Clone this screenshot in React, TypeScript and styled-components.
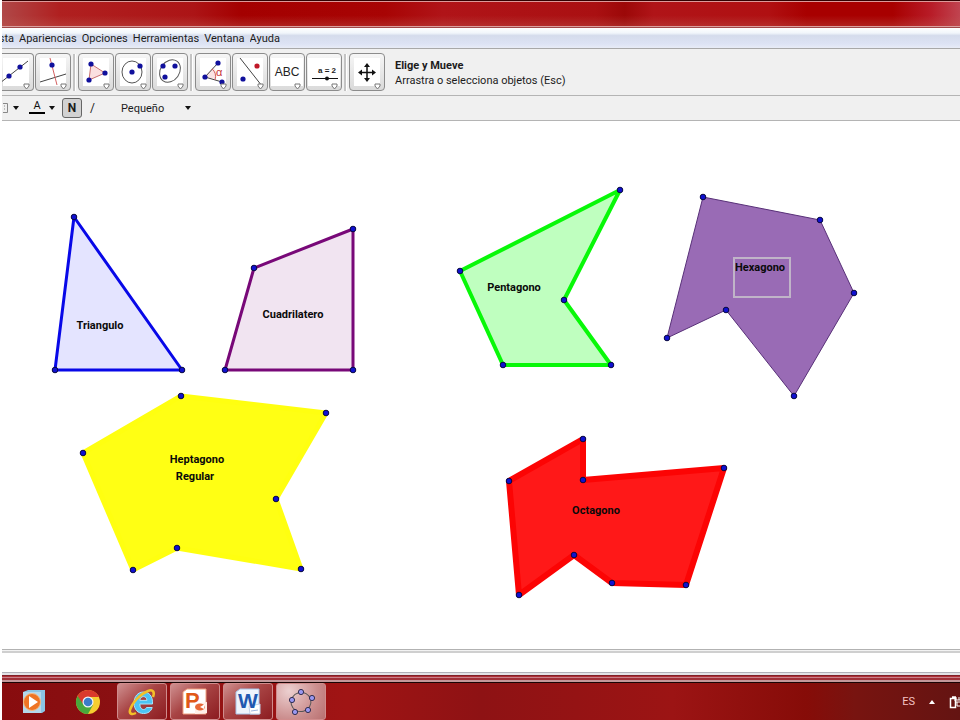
import React from "react";
import styled, { createGlobalStyle } from "styled-components";

const GlobalStyle = createGlobalStyle`
  * { box-sizing: border-box; }
  body { margin: 0; background: #fff; font-family: Roboto, "Liberation Sans", sans-serif; font-size: 11px; color: #1c1c1c; }
  button, select { font: inherit; color: inherit; padding: 0; margin: 0; }
`;

const Screen = styled.div`
  display: flex;
  flex-direction: column;
  min-height: 100vh;
  padding-left: 2px;
  overflow: hidden;
`;

const TitleBar = styled.header`
  height: 28px;
  border-top: 1px solid #300;
  border-bottom: 1px solid #a04848;
  box-shadow: inset 0 1px #d99, inset 0 -1px #dba0a0;
  background:
    linear-gradient(180deg, transparent 55%, rgba(190, 90, 80, 0.4)),
    linear-gradient(90deg, #b04848 0, #b02020 6%, #ac1416 20%, #a40000 25%, #a80404 40%, #b01418 46%, #aa1012 62%, #9c0808 65%, #b01418 68%, #b01012 80%, #a80000 84%, #a80000 93%, #b81c28 97%, #c04450 100%);
`;

const MenuBar = styled.nav`
  display: flex;
  align-items: center;
  gap: 5px;
  height: 21px;
  border-bottom: 1px solid #a8a8a8;
  background: linear-gradient(180deg, #fff 0, #f1f6fb 25%, #d5dcec 38%, #dde3f4 80%, #e8ecf6 100%);
`;

const MenuItem = styled.button<{ $cut?: boolean }>`
  display: flex;
  justify-content: flex-end;
  width: ${(p) => (p.$cut ? "12px" : "auto")};
  overflow: hidden;
  border: 0;
  background: none;
  white-space: nowrap;
`;

const ToolBar = styled.div`
  display: flex;
  align-items: center;
  height: 47px;
  background: #f0f0f0;
  border-bottom: 1px solid #b4b4b4;
`;

const ToolGroup = styled.div`
  display: flex;
  gap: 1px;
`;

const Divider = styled.span`
  width: 7px;
  height: 37px;
  display: flex;
  justify-content: center;
  &::before { content: ""; width: 2px; background: #c4c4c4; border-right: 1px solid #fff; }
`;

const ToolButton = styled.button<{ $cut?: boolean }>`
  display: flex;
  justify-content: ${(p) => (p.$cut ? "flex-end" : "center")};
  align-items: center;
  width: ${(p) => (p.$cut ? 32 : 36)}px;
  height: 38px;
  border: 1px solid #8c8c8c;
  border-left-width: ${(p) => (p.$cut ? 0 : 1)}px;
  border-radius: ${(p) => (p.$cut ? "0 4px 4px 0" : "4px")};
  background: linear-gradient(#f6f6f6, #dadada);
  overflow: hidden;
  svg { flex: none; display: block; }
`;

const Help = styled.div`
  margin-left: 10px;
  padding-top: 2px;
  font-size: 11px;
  line-height: 15px;
  white-space: nowrap;
`;

const HelpTitle = styled.div`
  font-weight: bold;
`;

const StyleBar = styled.div`
  display: flex;
  align-items: center;
  gap: 1px;
  height: 25px;
  background: #f0f0f0;
  border-bottom: 1px solid #b4b4b4;
`;

const StyleButton = styled.button<{ $width: number; $on?: boolean }>`
  display: flex;
  align-items: center;
  justify-content: center;
  width: ${(p) => p.$width}px;
  height: 20px;
  border: 1px solid ${(p) => (p.$on ? "#666" : "transparent")};
  border-radius: 3px;
  background: ${(p) => (p.$on ? "#d2d2d2" : "none")};
  font-weight: ${(p) => (p.$on ? "bold" : "normal")};
  font-size: 12px;
  svg { flex: none; display: block; }
`;

const SizeField = styled.label`
  display: flex;
  align-items: center;
  margin-left: 18px;
`;

const SizeSelect = styled.select`
  appearance: none;
  width: 64px;
  border: 0;
  background: none;
`;

const Canvas = styled.main`
  flex: 1;
  display: flex;
  min-height: 528px;
  svg { display: block; flex: 1; min-width: 0; }
  text { font: bold 11px Roboto, "Liberation Sans", sans-serif; fill: #0a0a0a; text-anchor: middle; }
`;

const InputStrip = styled.div`
  height: 24px;
  border-top: 1px solid #b2b2b2;
  border-bottom: 1px solid #b0b0b8;
  box-shadow: inset 0 1px #f2f2f2, inset 0 3px #cfcfcf;
`;

const WindowEdge = styled.div`
  height: 10px;
  background: linear-gradient(180deg, #e2e2e6 0 2px, #802028 2px 3px, #b03038 3px 4px, #c8808a 4px 5px, #a03038 5px 7px, #c4989a 7px 9px, #180404 9px);
`;

const TaskBar = styled.footer`
  display: flex;
  align-items: center;
  height: 37px;
  padding-left: 7px;
  background: linear-gradient(90deg, #880c0e 0, #8a1012 12%, #a01414 36%, #8e1214 50%, #9c1414 70%, #860c08 84%, #781410 89%, #641412 100%);
`;

const TaskButton = styled.button<{ $state?: "open" | "active" }>`
  display: flex;
  align-items: center;
  justify-content: center;
  width: 50px;
  height: 37px;
  margin-right: ${(p) => (p.$state ? 3 : 4)}px;
  border: 1px solid ${(p) => (p.$state ? "#d08c8c" : "transparent")};
  border-radius: 3px;
  background: ${(p) =>
    p.$state === "active"
      ? "radial-gradient(circle at 25% 20%, #ecd0d0, #cc8f8f 60%, #b87070)"
      : p.$state === "open"
      ? "linear-gradient(140deg, #cf9090, #a84444 45%, #8c1c20)"
      : "none"};
  svg { flex: none; display: block; }
`;

const Tray = styled.div`
  display: flex;
  align-items: center;
  gap: 14px;
  margin-left: auto;
  color: #f4c4c4;
  svg { display: block; }
`;

const TrayButton = styled.button`
  border: 0;
  background: none;
`;

const Dot = ({ x, y, c = "#10109c" }: { x: number; y: number; c?: string }) => (
  <circle cx={x} cy={y} r="2.600" fill={c} />
);

const ToolIcon = ({ children, wide }: { children: React.ReactNode; wide?: boolean }) => (
  <svg width="34" height="36" viewBox="0 0 34 36" fill="none" stroke="none" fontFamily="Liberation Sans, sans-serif">
    <rect x={wide ? 1 : 4} y="4" width={wide ? 32 : 26} height="28" fill="#fff" />
    {children}
    <path d="M25 30h5v2l-2.500 3-2.500-3z" fill="#fff" stroke="#777" />
  </svg>
);

const Arrow = () => (
  <svg width="6" height="4" viewBox="0 0 6 4"><path d="M0 0h6L3 4z" fill="#111" /></svg>
);

type Shape = { name: string; points: number[][]; fill: string; stroke: string; width: number };

const shapes: Shape[] = [
  { name: "Triangulo", points: [[72, 96], [53, 249], [180, 249]], fill: "#e4e4ff", stroke: "#0808e8", width: 3 },
  { name: "Cuadrilatero", points: [[252, 147], [351, 108], [351, 249], [223, 249]], fill: "#f1e4f1", stroke: "#780878", width: 3 },
  { name: "Pentagono", points: [[458, 150], [618, 69], [562, 179], [609, 244], [501, 244]], fill: "#bfffbf", stroke: "#08f808", width: 4 },
  { name: "Hexagono", points: [[701, 76], [818, 99], [852, 172], [792, 275], [724, 189], [665, 217]], fill: "#996bb5", stroke: "#583078", width: 1 },
  { name: "Heptagono", points: [[179, 275], [324, 292], [274, 378], [299, 448], [175, 427], [131, 449], [81, 332]], fill: "#ffff14", stroke: "#ffff10", width: 5 },
  { name: "Octagono", points: [[581, 318], [581, 359], [722, 347], [684, 464], [610, 462], [572, 434], [517, 474], [507, 360]], fill: "#ff1818", stroke: "#fc0404", width: 6 },
];

const labels: [string, number, number][] = [
  ["Triangulo", 98, 208],
  ["Cuadrilatero", 291, 197],
  ["Pentagono", 512, 170],
  ["Hexagono", 758, 150],
  ["Heptagono", 195, 342],
  ["Regular", 193, 359],
  ["Octagono", 594, 393],
];

const menus = ["Apariencias", "Opciones", "Herramientas", "Ventana", "Ayuda"];

export default function App() {
  return (
    <>
      <GlobalStyle />
      <Screen>
        <TitleBar />
        <MenuBar>
          <MenuItem $cut>sta</MenuItem>
          {menus.map((m) => <MenuItem key={m}>{m}</MenuItem>)}
        </MenuBar>
        <ToolBar>
          <ToolGroup>
            <ToolButton $cut aria-label="Recta">
              <ToolIcon><path d="M1 29L29 7" stroke="#444" /><Dot x={10} y={22} /><Dot x={21} y={13} /></ToolIcon>
            </ToolButton>
            <ToolButton aria-label="Perpendicular">
              <ToolIcon><path d="M4 28L30 20" stroke="#444" /><path d="M14 4L21 31" stroke="#d46060" /><Dot x={16} y={11} /></ToolIcon>
            </ToolButton>
          </ToolGroup>
          <Divider />
          <ToolGroup>
            <ToolButton aria-label="Polígono">
              <ToolIcon><path d="M12 10L26 19L10 26z" fill="#fbe0e0" stroke="#c87070" /><Dot x={12} y={10} /><Dot x={26} y={19} /><Dot x={10} y={26} /></ToolIcon>
            </ToolButton>
            <ToolButton aria-label="Circunferencia">
              <ToolIcon><ellipse cx="16" cy="18" rx="10" ry="11" stroke="#555" /><Dot x={16} y={18} /><Dot x={24} y={12} /></ToolIcon>
            </ToolButton>
            <ToolButton aria-label="Elipse">
              <ToolIcon><ellipse cx="17" cy="17" rx="9.500" ry="12" transform="rotate(35 17 17)" stroke="#555" /><Dot x={10} y={12} /><Dot x={22} y={12} /><Dot x={12} y={23} /></ToolIcon>
            </ToolButton>
          </ToolGroup>
          <Divider />
          <ToolGroup>
            <ToolButton aria-label="Ángulo">
              <ToolIcon>
                <path d="M9 23L17 13Q22 18 20 25z" fill="#fbe4e4" />
                <path d="M22 9L9 23L26 28" stroke="#444" /><path d="M16 15Q21 19 19 26" stroke="#d06060" />
                <text x="20" y="22" fontSize="11" fill="#c83838">α</text>
                <Dot x={22} y={9} /><Dot x={9} y={23} /><Dot x={26} y={28} />
              </ToolIcon>
            </ToolButton>
            <ToolButton aria-label="Simetría">
              <ToolIcon><path d="M7 4L29 32" stroke="#444" /><Dot x={24} y={12} c="#c01828" /><Dot x={10} y={25} /></ToolIcon>
            </ToolButton>
            <ToolButton aria-label="Texto">
              <ToolIcon wide><text x="17" y="22" fontSize="12" textAnchor="middle" fill="#222">ABC</text></ToolIcon>
            </ToolButton>
            <ToolButton aria-label="Deslizador">
              <ToolIcon wide><text x="20" y="19" fontSize="8" fontWeight="bold" textAnchor="middle" fill="#222">a = 2</text><path d="M5 24.500h26" stroke="#111" /><circle cx="20" cy="24.500" r="2" fill="#111" /></ToolIcon>
            </ToolButton>
          </ToolGroup>
          <Divider />
          <ToolButton aria-label="Elige y Mueve">
            <ToolIcon>
              <path d="M17 11v15M10 18.500h14" stroke="#111" strokeWidth="1.500" />
              <path d="M17 9l3 4h-6zM17 28l3-4h-6zM8 18.500l4-3v6zM26 18.500l-4-3v6z" fill="#111" />
            </ToolIcon>
          </ToolButton>
          <Help>
            <HelpTitle>Elige y Mueve</HelpTitle>
            <div>Arrastra o selecciona objetos (Esc)</div>
          </Help>
        </ToolBar>
        <StyleBar>
          <StyleButton $width={20} aria-label="Cuadrícula">
            <svg width="18" height="12" viewBox="0 0 18 12"><path d="M0 1.500h4.500v9H0M1 4h1M1 7h1" fill="none" stroke="#888" /><path d="M10 4h6l-3 4z" fill="#111" /></svg>
          </StyleButton>
          <StyleButton $width={38} aria-label="Color de texto">
            <svg width="28" height="16" viewBox="0 0 28 16"><text x="9" y="9" fontSize="11" textAnchor="middle" fill="#111">A</text><path d="M1 13h16" stroke="#000" strokeWidth="2" /><path d="M21 6h6l-3 4z" fill="#111" /></svg>
          </StyleButton>
          <StyleButton $width={20} $on>N</StyleButton>
          <StyleButton $width={19}>/</StyleButton>
          <SizeField>
            <SizeSelect aria-label="Tamaño de texto" defaultValue="Pequeño">
              <option>Pequeño</option>
            </SizeSelect>
            <Arrow />
          </SizeField>
        </StyleBar>
        <Canvas>
          <svg height="528" role="img" aria-label="Polígonos">
            {shapes.map((s) => (
              <g key={s.name}>
                <polygon points={s.points.map((p) => p.join(",")).join(" ")} fill={s.fill} stroke={s.stroke} strokeWidth={s.width} strokeLinejoin="bevel" />
                {s.points.map(([x, y]) => <circle key={`${x}-${y}`} cx={x} cy={y} r="2.800" fill="#1010d0" stroke="#080840" />)}
              </g>
            ))}
            <rect x="732" y="137" width="56" height="39" fill="none" stroke="#c0b4c8" strokeWidth="2" />
            {labels.map(([t, x, y]) => <text key={t} x={x} y={y}>{t}</text>)}
          </svg>
        </Canvas>
        <InputStrip />
        <WindowEdge />
        <TaskBar>
          <TaskButton aria-label="Reproductor multimedia">
            <svg width="24" height="24" viewBox="0 0 24 24">
              <path d="M1 2l5-2h17v21l-3 2H1z" fill="#8cc4e4" /><path d="M1 2h18v21H1z" fill="#b4d8ec" />
              <circle cx="10" cy="12" r="8.500" fill="#ee7424" stroke="#f8b880" /><path d="M7 6l9 6-9 6z" fill="#fff" />
            </svg>
          </TaskButton>
          <TaskButton aria-label="Chrome">
            <svg width="26" height="26" viewBox="0 0 26 26">
              <circle cx="13" cy="13" r="12" fill="#f6ce30" />
              <path d="M13 13L2.600 7A12 12 0 0 0 13 25l5-9z" fill="#48a83c" />
              <path d="M2.600 7A12 12 0 0 1 24 8H13L8 15z" fill="#da3a2c" />
              <circle cx="13" cy="13" r="5.500" fill="#f4f4f4" /><circle cx="13" cy="13" r="4.300" fill="#3c7cc8" />
            </svg>
          </TaskButton>
          <TaskButton $state="open" aria-label="Internet Explorer">
            <svg width="30" height="30" viewBox="0 0 30 30" fill="none">
              <path fillRule="evenodd" d="M25.500 17C26 9 22 5 16.500 5S7 9.500 7 16s4 10.500 9.500 10.500c4.500 0 7.500-2 8.700-6h-5.700c-.6 1.300-1.600 2-3 2-2.200 0-3.500-1.800-3.700-5.500zM12.800 13.400c.3-2.400 1.600-3.800 3.700-3.800s3.300 1.400 3.500 3.800z" fill="#4cc4f4" stroke="#a8e4fc" />
              <path d="M26 10c2-5 0-8-5-6C13 7 5 16 3 23c-1 4 2 5 6 3" stroke="#f4c028" strokeWidth="2.500" />
            </svg>
          </TaskButton>
          <TaskButton $state="open" aria-label="PowerPoint">
            <svg width="26" height="28" viewBox="0 0 26 28" fontFamily="Liberation Sans, sans-serif">
              <path d="M1 4l4-3h19v25H1z" fill="#fff" stroke="#f2a080" /><text x="3" y="20" fontSize="22" fontWeight="bold" fill="#e05818">P</text>
              <path d="M13 16l12-2v11l-12 1z" fill="#fff0e8" /><ellipse cx="18" cy="19" rx="5" ry="3.500" fill="#e86838" /><path d="M18 19l5-3-1 5z" fill="#fff" />
            </svg>
          </TaskButton>
          <TaskButton $state="open" aria-label="Word">
            <svg width="26" height="28" viewBox="0 0 26 28" fontFamily="Liberation Sans, sans-serif">
              <path d="M1 4l4-3h19v25H1z" fill="#eef4fc" stroke="#a8c4e8" /><path d="M14 18l11-2v10H15z" fill="#fff" stroke="#c0d0e8" />
              <text x="3" y="20" fontSize="21" fontWeight="bold" fill="#2058b0">W</text><path d="M16 23l7-1" stroke="#9cb8e0" />
            </svg>
          </TaskButton>
          <TaskButton $state="active" aria-label="GeoGebra">
            <svg width="28" height="28" viewBox="0 0 28 28" fill="none" stroke="#555">
              <ellipse cx="14" cy="14" rx="10" ry="9.500" transform="rotate(-15 14 14)" />
              {[[14, 4], [25, 10], [21, 22], [8, 24], [5, 12]].map(([x, y]) => <circle key={x} cx={x} cy={y} r="2.600" fill="#9a98f0" stroke="#302c50" />)}
            </svg>
          </TaskButton>
          <Tray>
            <span>ES</span>
            <TrayButton aria-label="Mostrar iconos ocultos"><svg width="6" height="4" viewBox="0 0 6 4"><path d="M0 4h6L3 0z" fill="#fff" /></svg></TrayButton>
            <svg width="11" height="14" viewBox="0 0 11 14" fill="none" stroke="#fff"><path d="M3 2h4M1.500 3.500h5v9h-5z" strokeWidth="1.500" /><path d="M5 5h6M7 2v3M10 2v3M6 7h5M8 7v4h3" /></svg>
          </Tray>
        </TaskBar>
      </Screen>
    </>
  );
}
